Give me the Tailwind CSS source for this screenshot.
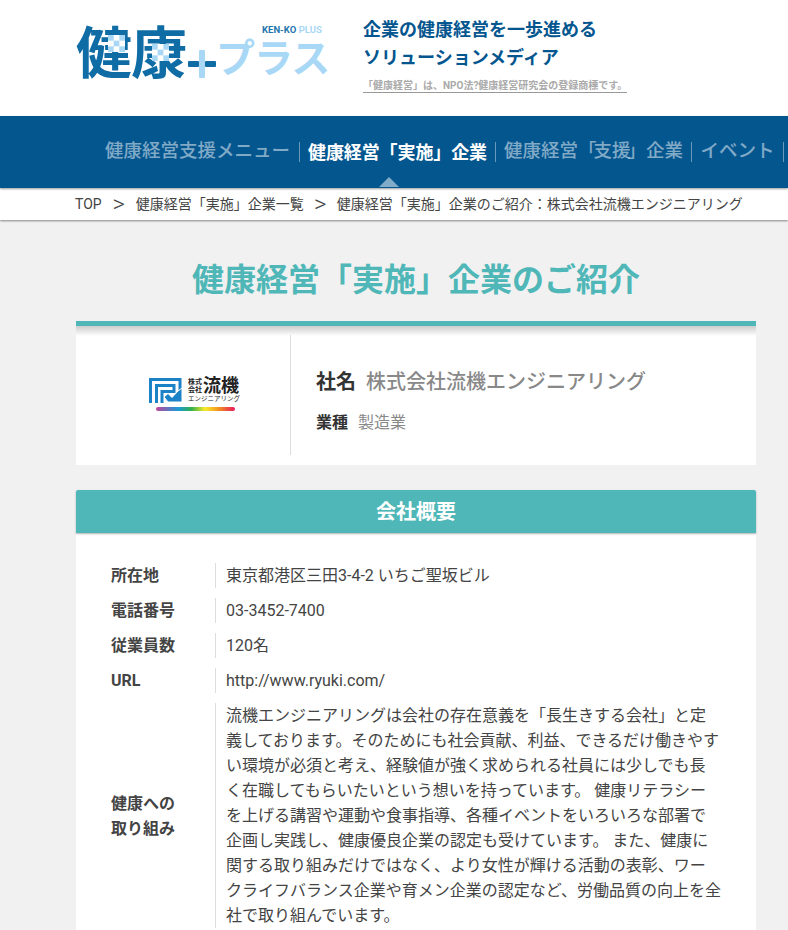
<!DOCTYPE html>
<html lang="ja">
<head>
  <meta charset="UTF-8" />
  <meta name="viewport" content="width=device-width, initial-scale=1.0" />
  <title>健康プラス</title>
  <script src="https://cdn.jsdelivr.net/npm/@tailwindcss/browser@4"></script>
</head>
<body class="h-[930px] overflow-hidden bg-[#f1f1f1] text-[#444] font-['Roboto','Noto_Sans_CJK_JP',sans-serif]">
  <!-- Header -->
  <header class="h-[116px] bg-white flex pl-[76px]">
    <div class="w-[287px] pt-[21px] relative">
      <div class="flex items-end h-[66px] text-[#0f6ca5]">
        <span class="text-[56px] leading-[66px] font-bold tracking-[-1px] relative">健康
          <svg class="absolute left-[32px] top-[14px]" width="17" height="17" viewBox="0 0 15 15"><rect width="15" height="15" fill="#fff"/><rect width="5" height="5" fill="#a8d8f5"/><rect x="10" width="5" height="5" fill="#a8d8f5"/><rect x="5" y="5" width="5" height="5" fill="#a8d8f5"/><rect y="10" width="5" height="5" fill="#a8d8f5"/><rect x="10" y="10" width="5" height="5" fill="#a8d8f5"/></svg>
          <svg class="absolute left-[76px] top-[23px]" width="17" height="17" viewBox="0 0 15 15"><rect width="15" height="15" fill="#fff"/><rect width="5" height="5" fill="#a8d8f5"/><rect x="10" width="5" height="5" fill="#a8d8f5"/><rect x="5" y="5" width="5" height="5" fill="#a8d8f5"/><rect y="10" width="5" height="5" fill="#a8d8f5"/><rect x="10" y="10" width="5" height="5" fill="#a8d8f5"/></svg>
        </span>
        <svg class="mb-[9px] ml-[2px] shrink-0" width="28" height="28" viewBox="0 0 28 28"><rect x="11" y="0" width="6" height="28" rx="1" fill="#a8d8f5"/><rect x="0" y="11" width="11" height="6" rx="1" fill="#0f6ca5"/><rect x="17" y="11" width="11" height="6" rx="1" fill="#0f6ca5"/></svg>
        <span class="text-[39px] leading-[56px] font-bold text-[#a8d8f5] tracking-[-1px] whitespace-nowrap">プラス</span>
      </div>
      <div class="absolute left-[186px] top-[24px] text-[9.5px] leading-[12px] font-bold whitespace-nowrap"><span class="text-[#1f76ad]">KEN-KO</span> <span class="text-[#a8d8f5]">PLUS</span></div>
    </div>
    <div class="pt-[16px]">
      <p class="text-[18px] leading-[28px] font-bold text-[#04568f]">企業の健康経営を一歩進める<br>ソリューションメディア</p>
      <p class="mt-[7px] text-[10px] leading-[13px] font-bold text-[#aaa] border-b border-[#999] whitespace-nowrap">「健康経営」は、NPO法?健康経営研究会の登録商標です。</p>
    </div>
  </header>

  <!-- Nav -->
  <nav class="h-[72px] bg-[#04568f] flex items-center pl-[96px] relative z-10 shadow-[0_1px_2px_rgba(0,0,0,0.4)]">
    <a class="px-[9px] h-[20px] flex items-center border-r border-white/40 text-[18.5px] font-medium text-white/50 whitespace-nowrap">健康経営支援メニュー</a>
    <a class="pl-[8px] pr-[8px] h-[20px] flex items-center border-r border-white/40 text-[18px] font-bold tracking-[-0.1px] text-white whitespace-nowrap relative">健康経営「実施」企業
      <span class="absolute left-[79px] top-[35px] w-0 h-0 border-x-[10px] border-x-transparent border-b-[10px] border-b-white/50"></span>
    </a>
    <a class="pl-[8px] pr-[8px] h-[20px] flex items-center border-r border-white/40 text-[18.5px] font-medium text-white/50 whitespace-nowrap"><span>健康経営<span class="tracking-[-3px]">「</span>支<span class="tracking-[-3px]">援</span>」企業</span></a>
    <a class="px-[8.5px] h-[20px] flex items-center border-r border-white/40 text-[18.5px] font-medium text-white/50 whitespace-nowrap">イベント</a>
  </nav>

  <!-- Breadcrumb -->
  <div class="h-[32px] bg-white flex items-center pl-[75px] text-[14px] text-[#444] whitespace-nowrap shadow-[0_1px_2px_rgba(0,0,0,0.45)]">
    <span>TOP</span><span class="w-[34px] text-center text-[24px] leading-[20px] font-light">&gt;</span><span>健康経営「実施」企業一覧</span><span class="w-[33px] text-center text-[24px] leading-[20px] font-light">&gt;</span><span>健康経営「実施」企業のご紹介：株式会社流機エンジニアリング</span>
  </div>

  <main class="w-[680px] ml-[76px]">
    <h1 class="mt-[38px] text-center text-[32px] leading-[44px] font-bold text-[#4fb7b7]">健康経営「実施」企業のご紹介</h1>

    <!-- Company card -->
    <section class="mt-[19px] h-[144px] bg-white border-t-[5px] border-[#4fb7b7] flex py-[9px] relative">
      <div class="absolute inset-x-0 top-0 h-[10px] bg-gradient-to-b from-black/20 to-transparent"></div>
      <div class="w-[215px] border-r border-[#ddd] h-[120px] flex flex-col pl-[73px] pt-[41px]">
        <div class="flex h-[27px] gap-[5px]">
          <svg class="shrink-0 mt-[2px]" width="34" height="25" viewBox="0 0 34 25" fill="none">
            <path d="M1.5 25V1.5H31V12" stroke="#1c82c7" stroke-width="3"/>
            <path d="M7.5 25V7.5H25V13.5H13V25" stroke="#1c82c7" stroke-width="3"/>
            <path d="M33 10V24H19L15 19L19 15.5L23 19.5L29 13Z" fill="#1c82c7" stroke="#fff" stroke-width="1"/>
          </svg>
          <div class="text-[#222]">
            <div class="flex items-center h-[20px]">
              <span class="text-[7px] leading-[8px] font-bold">株式<br>会社</span>
              <span class="ml-[1px] text-[18px] leading-[20px] font-bold">流機</span>
            </div>
            <div class="text-[6.5px] leading-[7px] whitespace-nowrap">エンジニアリング</div>
          </div>
        </div>
        <div class="mt-[4px] ml-[7px] w-[79px] h-[4px] rounded-full blur-[0.5px] bg-[linear-gradient(to_right,#c2469c,#1c9ad6_28%,#35b04a_45%,#f9ea2a_62%,#f39a1e_78%,#e8175d)]"></div>
      </div>
      <div class="pl-[25px] pt-[32px]">
        <p class="text-[20px] leading-[30px] whitespace-nowrap"><span class="font-bold text-[#333]">社名</span><span class="ml-[10px] font-medium text-[#888]">株式会社流機エンジニアリング</span></p>
        <p class="mt-[14px] text-[16px] leading-[24px] whitespace-nowrap"><span class="font-bold text-[#333]">業種</span><span class="ml-[10px] text-[#888]">製造業</span></p>
      </div>
    </section>

    <!-- Overview -->
    <h2 class="mt-[25px] h-[43px] bg-[#4fb7b7] rounded-t-[2px] shadow-[0_1px_2px_rgba(0,0,0,0.3)] flex items-center justify-center text-[20px] font-bold text-white relative">会社概要</h2>
    <div class="bg-white pt-[30px] pl-[35px] pr-[34px] pb-[30px]">
      <dl class="text-[16px] leading-[25px]">
        <div class="flex items-center h-[25px] mb-[10px]">
          <dt class="w-[104px] font-bold">所在地</dt>
          <dd class="pl-[10px] border-l border-[#ddd]">東京都港区三田3-4-2 いちご聖坂ビル</dd>
        </div>
        <div class="flex items-center h-[25px] mb-[10px]">
          <dt class="w-[104px] font-bold">電話番号</dt>
          <dd class="pl-[10px] border-l border-[#ddd]">03-3452-7400</dd>
        </div>
        <div class="flex items-center h-[25px] mb-[10px]">
          <dt class="w-[104px] font-bold">従業員数</dt>
          <dd class="pl-[10px] border-l border-[#ddd]">120名</dd>
        </div>
        <div class="flex items-center h-[25px] mb-[10px]">
          <dt class="w-[104px] font-bold">URL</dt>
          <dd class="pl-[10px] border-l border-[#ddd]">http://www.ryuki.com/</dd>
        </div>
        <div class="flex items-center">
          <dt class="w-[104px] font-bold">健康への<br>取り組み</dt>
          <dd class="flex-1 pl-[10px] border-l border-[#ddd] whitespace-nowrap">流機エンジニアリングは会社の存在意義を「長生きする会社」と定<br>義しております。そのためにも社会貢献、利益、できるだけ働きやす<br>い環境が必須と考え、経験値が強く求められる社員には少しでも長<br>く在職してもらいたいという想いを持っています。 健康リテラシー<br>を上げる講習や運動や食事指導、各種イベントをいろいろな部署で<br>企画し実践し、健康優良企業の認定も受けています。 また、健康に<br>関する取り組みだけではなく、より女性が輝ける活動の表彰、ワー<br>クライフバランス企業や育メン企業の認定など、労働品質の向上を全<br>社で取り組んでいます。</dd>
        </div>
      </dl>
    </div>
  </main>
</body>
</html>
